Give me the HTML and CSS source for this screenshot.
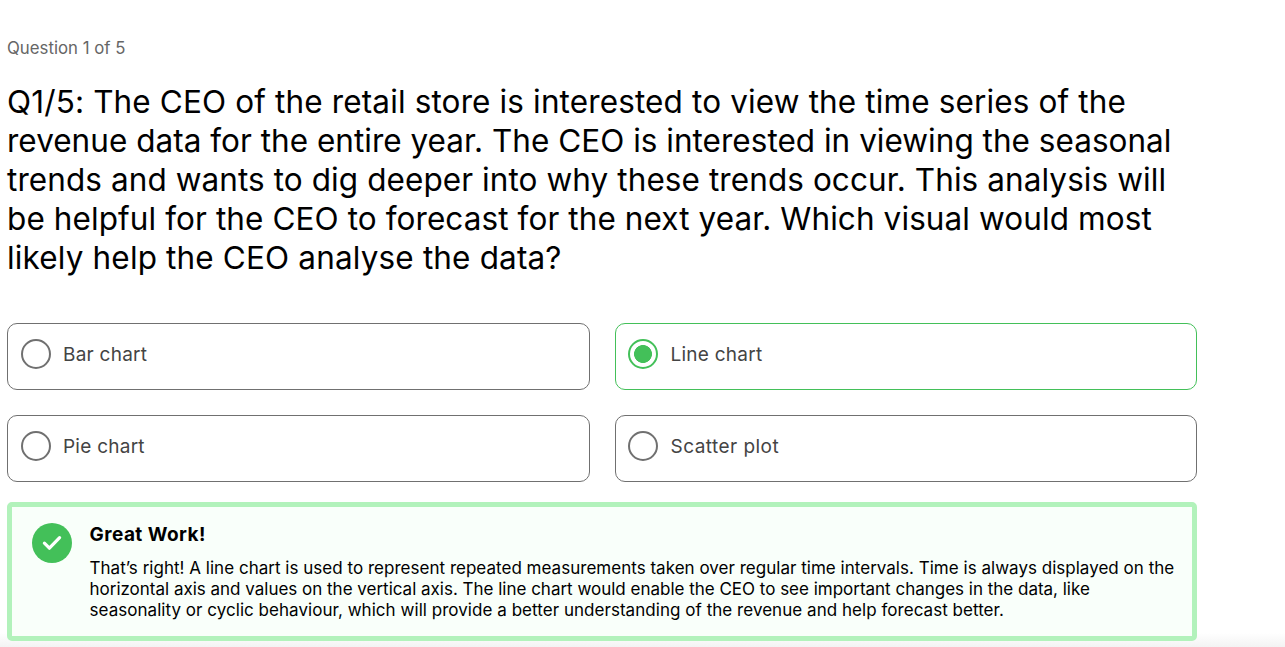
FILE: index.html
```html
<!DOCTYPE html>
<html lang="en">
<head>
<meta charset="utf-8">
<title>Quiz</title>
<link rel="stylesheet" href="styles.css">
</head>
<body>
<main class="quiz">
  <p class="progress">Question 1 of 5</p>
  <h1 class="question">
    <span class="line q1">Q1/5: The CEO of the retail store is interested to view the time series of the</span>
    <span class="line q2">revenue data for the entire year. The CEO is interested in viewing the seasonal</span>
    <span class="line q3">trends and wants to dig deeper into why these trends occur. This analysis will</span>
    <span class="line q4">be helpful for the CEO to forecast for the next year. Which visual would most</span>
    <span class="line q5">likely help the CEO analyse the data?</span>
  </h1>
  <div class="options">
    <div class="option"><span class="radio"></span><span class="label">Bar chart</span></div>
    <div class="option selected"><span class="radio"></span><span class="label">Line chart</span></div>
    <div class="option"><span class="radio"></span><span class="label">Pie chart</span></div>
    <div class="option"><span class="radio"></span><span class="label wide">Scatter plot</span></div>
  </div>
  <section class="feedback">
    <svg class="check" viewBox="0 0 40 40"><circle cx="20" cy="20" r="20"/><path d="M12.4 20.2l5 5L27.6 14.6"/></svg>
    <div class="message">
      <h2 class="title">Great Work!</h2>
      <p class="body">
        <span class="line b1">That’s right! A line chart is used to represent repeated measurements taken over regular time intervals. Time is always displayed on the</span>
        <span class="line b2">horizontal axis and values on the vertical axis. The line chart would enable the CEO to see important changes in the data, like</span>
        <span class="line b3">seasonality or cyclic behaviour, which will provide a better understanding of the revenue and help forecast better.</span>
      </p>
    </div>
  </section>
</main>
</body>
</html>
```

FILE: styles.css
```css
* { box-sizing: border-box; }
body {
  margin: 0;
  height: 647px;
  overflow: hidden;
  font-family: Inter, sans-serif;
  color: #000;
  background: linear-gradient(#fff, #f3f3f3) 0 100% / 100% 14px no-repeat #fff;
}
p, h1, h2 { margin: 0; }
.quiz { width: 1197px; padding: 36px 0 0 7px; }
.progress { font-size: 16.8px; line-height: 24px; color: #666; }
.line { display: block; width: max-content; white-space: nowrap; }
.question { margin-top: 22px; font-size: 31.5px; line-height: 39px; font-weight: 400; }
.q1 { letter-spacing: 0.135px; }
.q2 { letter-spacing: 0.02px; }
.q3 { letter-spacing: 0.08px; }
.q4 { letter-spacing: 0.09px; }
.q5 { letter-spacing: 0.15px; }
.options {
  display: grid;
  grid-template-columns: 1fr 1fr;
  grid-auto-rows: 67px;
  gap: 25px;
  margin-top: 46px;
}
.option {
  display: flex;
  align-items: flex-start;
  gap: 12.4px;
  padding: 15px 12.6px;
  border: 1px solid #707070;
  border-radius: 10px;
}
.radio { width: 30px; height: 30px; border: 2px solid #707070; border-radius: 50%; }
.label { font-size: 19px; line-height: 32px; color: #444; letter-spacing: 0.25px; }
.wide { letter-spacing: 0.46px; }
.selected { border-color: #43c059; }
.selected .radio {
  border-color: #43c059;
  background: radial-gradient(circle, #43c059 8.6px, transparent 9.3px);
}
.feedback {
  display: flex;
  gap: 17.5px;
  height: 139px;
  margin-top: 20px;
  padding: 16px 20px;
  border: 5px solid #b2f2bb;
  border-radius: 5px;
  background: #f9fffa;
}
.check { flex: none; width: 40px; height: 40px; fill: #43c059; }
.check path { fill: none; stroke: #fff; stroke-width: 3.2; stroke-linecap: round; stroke-linejoin: round; }
.title { font-size: 19px; line-height: 24px; font-weight: 700; letter-spacing: 0.45px; }
.body { margin-top: 11px; font-size: 17px; line-height: 21px; }
.b1 { letter-spacing: 0.02px; }
.b2 { letter-spacing: -0.01px; }
.b3 { letter-spacing: 0.04px; }
```
